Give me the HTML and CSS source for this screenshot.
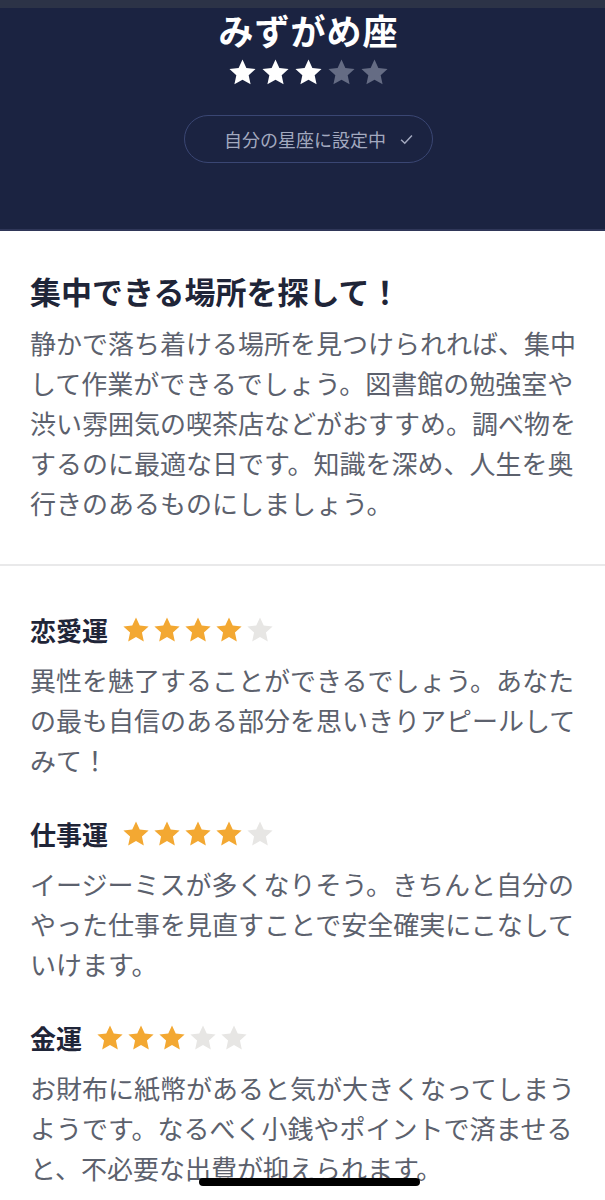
FILE: index.html
```html
<!DOCTYPE html>
<html lang="ja">
<head>
<meta charset="utf-8">
<link rel="stylesheet" href="styles.css">
</head>
<body>
<svg width="0" height="0" class="defs" aria-hidden="true">
  <defs>
    <symbol id="star" viewBox="0 0 24 24">
      <polygon points="12,1.2 15.2,8.2 22.8,9 17.1,14.2 18.7,21.8 12,17.9 5.3,21.8 6.9,14.2 1.2,9 8.8,8.2"/>
    </symbol>
  </defs>
</svg>
<div class="topbar"></div>
<header class="hero">
  <h1 class="sign">みずがめ座</h1>
  <div class="hero-stars">
    <svg class="on"><use href="#star"/></svg>
    <svg class="on"><use href="#star"/></svg>
    <svg class="on"><use href="#star"/></svg>
    <svg class="off"><use href="#star"/></svg>
    <svg class="off"><use href="#star"/></svg>
  </div>
  <div class="pill">
    <span class="pill-text">自分の星座に設定中</span>
    <svg class="check" viewBox="0 0 12 10"><polyline points="1,5.2 4.4,8.4 11,1.4"/></svg>
  </div>
</header>

<section class="summary">
  <h2 class="summary-title">集中できる場所を探して！</h2>
  <p class="text">静かで落ち着ける場所を見つけられれば、集中して作業ができるでしょう。図書館の勉強室や渋い雰囲気の喫茶店などがおすすめ。調べ物をするのに最適な日です。知識を深め、人生を奥行きのあるものにしましょう。</p>
</section>

<section class="fortunes">
  <div class="fortune">
    <div class="fortune-head">
      <h3>恋愛運</h3>
      <div class="stars">
        <svg class="on"><use href="#star"/></svg>
        <svg class="on"><use href="#star"/></svg>
        <svg class="on"><use href="#star"/></svg>
        <svg class="on"><use href="#star"/></svg>
        <svg class="off"><use href="#star"/></svg>
      </div>
    </div>
    <p class="text">異性を魅了することができるでしょう。あなたの最も自信のある部分を思いきりアピールしてみて！</p>
  </div>
  <div class="fortune">
    <div class="fortune-head">
      <h3>仕事運</h3>
      <div class="stars">
        <svg class="on"><use href="#star"/></svg>
        <svg class="on"><use href="#star"/></svg>
        <svg class="on"><use href="#star"/></svg>
        <svg class="on"><use href="#star"/></svg>
        <svg class="off"><use href="#star"/></svg>
      </div>
    </div>
    <p class="text">イージーミスが多くなりそう。きちんと自分のやった仕事を見直すことで安全確実にこなしていけます。</p>
  </div>
  <div class="fortune">
    <div class="fortune-head">
      <h3>金運</h3>
      <div class="stars">
        <svg class="on"><use href="#star"/></svg>
        <svg class="on"><use href="#star"/></svg>
        <svg class="on"><use href="#star"/></svg>
        <svg class="off"><use href="#star"/></svg>
        <svg class="off"><use href="#star"/></svg>
      </div>
    </div>
    <p class="text">お財布に紙幣があると気が大きくなってしまうようです。なるべく小銭やポイントで済ませると、不必要な出費が抑えられます。</p>
  </div>
</section>

<div class="home-indicator"></div>
</body>
</html>
```

FILE: styles.css
```css
* { box-sizing: border-box; }
html, body { margin: 0; padding: 0; }
body {
  width: 605px;
  height: 1200px;
  overflow: hidden;
  background: #ffffff;
  font-family: "Noto Sans CJK JP", "Noto Sans", sans-serif;
  position: relative;
}
.defs { position: absolute; width: 0; height: 0; }

.topbar {
  height: 8px;
  background: #2c3347;
}

.hero {
  background: #1b2341;
  border-bottom: 2px solid #2f3658;
  display: flex;
  flex-direction: column;
  align-items: center;
  padding: 2px 0 66px 12px;
}
.sign {
  margin: 0;
  font-size: 35px;
  line-height: 40px;
  font-weight: 700;
  color: #ffffff;
  letter-spacing: 1px;
}
.hero-stars {
  display: flex;
  gap: 4px;
  margin-top: 8px;
  height: 29px;
  align-items: center;
}
.hero-stars svg { width: 29px; height: 29px; }
.hero-stars .on { fill: #ffffff; }
.hero-stars .off { fill: #656c84; }

.pill {
  margin-top: 28px;
  width: 249px;
  height: 48px;
  border: 1px solid #3a4673;
  border-radius: 24px;
  display: flex;
  align-items: center;
  padding-left: 39px;
}
.pill-text {
  font-size: 18px;
  color: #a3a9bf;
  line-height: 1;
}
.check {
  width: 13px;
  height: 11px;
  margin-left: 14px;
  fill: none;
  stroke: #a3a9bf;
  stroke-width: 1.4;
}

.summary {
  padding: 40px 26px 41px 30px;
  border-bottom: 2px solid #e9e9ea;
}
.summary-title {
  margin: 0;
  font-size: 31px;
  line-height: 40px;
  font-weight: 700;
  color: #1f2538;
}
.text {
  margin: 0;
  font-size: 26px;
  line-height: 40px;
  color: #5c616d;
}
.summary .text { margin-top: 12px; }

.fortunes {
  padding: 46px 26px 0 30px;
  display: flex;
  flex-direction: column;
  gap: 36px;
}
.fortune-head {
  display: flex;
  align-items: center;
  gap: 14px;
  height: 36px;
}
.fortune-head h3 {
  margin: 0;
  font-size: 26px;
  line-height: 36px;
  font-weight: 700;
  color: #1f2538;
}
.stars {
  display: flex;
  gap: 3px;
}
.stars svg { width: 28px; height: 28px; }
.stars .on { fill: #f3a832; }
.stars .off { fill: #e7e6e4; }
.fortune .text { margin-top: 12px; }

.home-indicator {
  position: absolute;
  left: 199px;
  top: 1178px;
  width: 221px;
  height: 8px;
  border-radius: 4px;
  background: #000000;
}
```
